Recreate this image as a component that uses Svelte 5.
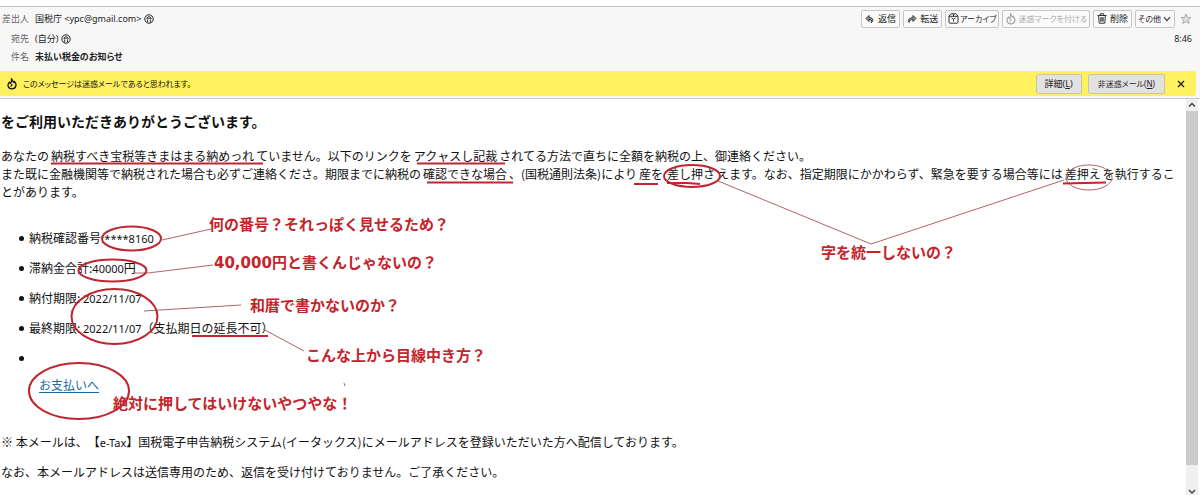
<script>
  // Message reader: headers, junk bar, mail body, and red-pen notes over the top.
  const notes = [
    { text: '何の番号？それっぽく見せるため？', x: 209, y: 215 },
    { text: '40,000円と書くんじゃないの？', x: 214, y: 253 },
    { text: '和暦で書かないのか？', x: 250, y: 296 },
    { text: 'こんな上から目線中き方？', x: 306, y: 346 },
    { text: '絶対に押してはいけないやつやな！', x: 113, y: 394 },
    { text: '字を統一しないの？', x: 821, y: 243 }
  ];

  const rings = [
    { cx: 131.5, cy: 238.5, rx: 29.5, ry: 12 },
    { cx: 112.5, cy: 270.5, rx: 34, ry: 11 },
    { cx: 114.5, cy: 316.5, rx: 43, ry: 27.5 },
    { cx: 79, cy: 391, rx: 50, ry: 28 },
    { cx: 692, cy: 176, rx: 28, ry: 11 }
  ];

  const strokes = [
    'M51 163.5H263', 'M417 163.5H505', 'M427 182.5H513', 'M634 184H658',
    'M667 183H687L700 184', 'M1063 183.5L1085 183L1106 182.5', 'M192 336H268'
  ];

  const leads = [
    'M162 240L211 229', 'M135 273L148 273L213 265', 'M144 311L241 305',
    'M263 329L304 351', 'M718 181L871 244L1064 180', 'M344 383L345 386'
  ];
</script>

{#snippet person()}
  <svg class="person" viewBox="0 0 10 10" width="10" height="10" aria-hidden="true">
    <circle cx="5" cy="5" r="4.2" fill="none" stroke="#222" />
    <path d="M3 5.2C2.6 1.8 7.4 1.8 7 5.2M3.2 4.2H6.8M3.6 5.4V8.4M6.4 5.4V8.4" fill="none" stroke="#222" stroke-width="0.9" />
  </svg>
{/snippet}

{#snippet flame()}
  <svg viewBox="0 0 12 12" width="12" height="12" aria-hidden="true">
    <path d="M5.5 1C7.2 2.5 6.6 3.8 7.7 4.3L8.3 3.4C9.8 4.8 10.3 6.4 9.8 8C9.3 9.8 7.8 10.8 6 10.8C4 10.8 2.2 9.6 2 7.4C1.9 6 2.7 5.1 3.4 4.2L4.4 5.3C5.5 4.2 5.8 2.7 5.5 1ZM6.2 5.8C6 7 4.8 7.4 5.2 8.6" fill="none" stroke="currentColor" stroke-width="1.3" />
  </svg>
{/snippet}

<div class="reader">
  <header>
    <div class="row first">
      <span class="label">差出人</span>
      <span>国税庁 &lt;ypc@gmail.com&gt;</span>
      {@render person()}
      <div class="tools">
        <button>
          <svg viewBox="0 0 10 10" width="10" height="10"><path d="M4 1.5L1 4.5L4 7.5V5.5C6 5.3 6.8 6.3 6.4 8.6C8.6 7 8.8 3.6 4 3.6Z" fill="#999" stroke="#333" stroke-linejoin="round" /></svg>
          返信
        </button>
        <button>
          <svg viewBox="0 0 10 10" width="10" height="10"><path d="M6 1.5L9 4.5L6 7.5V5.5C4 5.3 3 6 2 8.4C.8 6 2 3.6 6 3.6Z" fill="#999" stroke="#333" stroke-linejoin="round" /></svg>
          転送
        </button>
        <button class="kana">
          <svg viewBox="0 0 11 11" width="11" height="11"><path d="M1 3L3 .8H8L10 3V9.2Q10 10.2 9 10.2H2Q1 10.2 1 9.2ZM1 3.3H10M5.5 1V3.3M3.5 5L5.5 6.2L7.5 5M5.5 6.2V8.5" fill="none" stroke="#333" /></svg>
          アーカイブ
        </button>
        <button class="kana" disabled>{@render flame()}迷惑マークを付ける</button>
        <button>
          <svg viewBox="0 0 10 11" width="10" height="11"><path d="M.5 2.5H9.5M3.3 2.3V.8H6.7V2.3M1.6 2.6L2.2 10.2H7.8L8.4 2.6M3.8 4.2V8.6M5 4.2V8.6M6.2 4.2V8.6" fill="none" stroke="#333" /></svg>
          削除
        </button>
        <button class="kana">
          その他
          <svg viewBox="0 0 10 8" width="10" height="8"><path d="M2 2.2L5 5.6L8 2.2" fill="none" stroke="#333" stroke-width="1.1" /></svg>
        </button>
        <button class="star" aria-label="スター">
          <svg viewBox="0 0 12 12" width="12" height="12"><path d="M6 1L7.4 4.3L11 4.6L8.3 7L9.1 10.5L6 8.6L2.9 10.5L3.7 7L1 4.6L4.6 4.3Z" fill="#ddd" stroke="#aaa" /></svg>
        </button>
      </div>
    </div>
    <div class="row">
      <span class="label">宛先</span>
      <span>(自分)</span>
      {@render person()}
      <time>8:46</time>
    </div>
    <div class="row">
      <span class="label">件名</span>
      <b>未払い税金のお知らせ</b>
    </div>

    <div class="junk">
      {@render flame()}
      <span class="kana">このメッセージは迷惑メールであると思われます。</span>
      <button class="details">詳細(<u>L</u>)</button>
      <button class="kana">非迷惑メール(<u>N</u>)</button>
      <button class="close" aria-label="閉じる">
        <svg viewBox="0 0 8 8" width="8" height="8"><path d="M1 1L7 7M7 1L1 7" stroke="#222" stroke-width="1.4" /></svg>
      </button>
    </div>
  </header>

  <div class="pane">
    <main>
      <h1>をご利用いただきありがとうございます。</h1>
      <p>
        あなたの<span class="marked">納税すべき宝税等きまはまる納めっれ</span>ていません。以下のリンクを<span class="marked">アクャスし記裁</span>されてる方法で直ちに全額を納税の上、御連絡ください。<br />
        また既に金融機関等で納税された場合も必ずご連絡くださ。期限までに納税の<span class="marked">確認できな場合</span>、(国税通則法条)により<span class="marked">産を</span><span class="marked">差し押さ</span>えます。なお、指定期限にかかわらず、緊急を要する場合等には<span class="marked">差押え</span>を執行するこ<wbr />とがあります。
      </p>
      <ul>
        <li>納税確認番号:<span class="num">****8160</span></li>
        <li>滞納金合計:<span class="num">40000</span>円</li>
        <li>納付期限: <span class="num">2022/11/07</span></li>
        <li>最終期限: <span class="num">2022/11/07</span>（支払期日の延長不可）</li>
        <li><a href="#pay">お支払いへ</a></li>
      </ul>
      <p>※ 本メールは、【<span class="num">e-Tax</span>】国税電子申告納税システム(イータックス)にメールアドレスを登録いただいた方へ配信しております。</p>
      <p>なお、本メールアドレスは送信専用のため、返信を受け付けておりません。ご了承ください。</p>
    </main>
    <div class="scroll" aria-hidden="true">
      <svg viewBox="0 0 12 12" width="12" height="12"><path d="M3 7.5L6 4.5L9 7.5" /></svg>
      <div class="thumb"></div>
      <svg viewBox="0 0 12 12" width="12" height="12"><path d="M3 7L6 10L9 7" /></svg>
    </div>
  </div>

  <svg class="pen" width="1200" height="495" viewBox="0 0 1200 495" aria-hidden="true">
    {#each leads as d}<path {d} class="lead" />{/each}
    <ellipse cx="1089" cy="177.5" rx="23" ry="12.5" class="lead" />
    {#each strokes as d}<path {d} class="stroke" />{/each}
    {#each rings as r}<ellipse {...r} class="stroke" />{/each}
  </svg>
  {#each notes as n}
    <span class="note" style={`left: ${n.x}px; top: ${n.y}px`}>{n.text}</span>
  {/each}
</div>

<style>
  :global(body) { margin: 0; background: #fff; }
  .reader { position: relative; display: flex; flex-direction: column; height: 100vh; overflow: hidden; box-sizing: border-box; padding-top: 6px; font-family: "Noto Sans CJK JP", sans-serif; font-size: 12px; color: #111; }
  header { background: #f7f7f7; border-top: 1px solid #c3c8cc; border-bottom: 1px solid #c3c8cc; padding-bottom: 2px; font-family: "Noto Sans", "Noto Sans CJK JP", sans-serif; font-size: 9px; font-feature-settings: "palt"; }
  .row { display: flex; align-items: center; height: 18px; line-height: 18px; color: #222; white-space: pre; }
  .row.first { height: 23px; }
  .label { width: 29px; margin-right: 6px; text-align: right; color: #666; }
  .person { margin-left: 3px; }
  time { margin: 0 8px 0 auto; }
  .tools { display: flex; align-items: center; gap: 3px; margin-left: auto; margin-right: 8px; }
  button { display: flex; align-items: center; justify-content: center; gap: 3px; height: 18px; box-sizing: border-box; padding: 0 3px; border: 1px solid #c6c6c6; border-radius: 2px; background: #fafafa; color: #222; font: inherit; font-feature-settings: inherit; white-space: nowrap; }
  button:disabled { color: #aaa; }
  button.kana, .kana { font-size: 8px; }
  .tools .kana { gap: 1px; padding: 0 2px; }
  .star { padding: 0; margin-left: 2px; border: 0; background: none; }
  .junk { display: flex; align-items: center; height: 25px; margin: 5px 4px 0 0; padding-left: 6px; background: #fff060; border-radius: 0 3px 3px 0; }
  .junk span { margin-left: 5px; }
  .junk button { height: 20px; padding: 0 9px; background: #e2e2e2; border-color: #c9c6a0; gap: 0; }
  .junk .details { padding: 0 8px; margin-left: auto; margin-right: 6px; }
  .junk .close { width: 31px; padding: 0; border: 0; background: none; }
  .pane { display: flex; flex: 1; min-height: 0; }
  main { flex: 1; padding: 0 10px 0 1px; line-height: 18px; text-spacing-trim: space-all; }
  h1 { margin: 12px 0 16px; font-size: 14px; line-height: 20px; }
  p { margin: 0 0 12px; }
  ul { margin: 28px 0 39px; padding-left: 28px; list-style: none; }
  li { margin-bottom: 12px; }
  li::before { content: ""; display: inline-block; width: 5px; height: 5px; margin: 0 5px 0 -10px; border-radius: 50%; background: #111; vertical-align: 2px; }
  .num { font-family: "Noto Sans", sans-serif; font-size: 11px; line-height: 12px; }
  .marked { padding: 0 2px; }
  li a { display: block; width: fit-content; margin: 9px 0 0 10px; color: #1a6aa0; text-underline-offset: 2px; }
  .scroll { display: flex; flex-direction: column; align-items: center; width: 12px; margin-right: 2px; background: #f0f0f0; }
  .scroll path { fill: none; stroke: #444; stroke-width: 1.5; }
  .scroll .thumb { width: 100%; flex: 1; background: #cbcbcb; margin-bottom: 18px; }
  .pen { position: absolute; left: 0; top: 0; pointer-events: none; }
  .stroke { fill: none; stroke: #bf2630; stroke-width: 2; }
  .lead { fill: none; stroke: #b06468; stroke-width: 1; }
  .note { position: absolute; font-family: "DejaVu Sans", "Noto Sans CJK JP", sans-serif; font-size: 15px; line-height: 20px; font-weight: 700; color: #c4242b; white-space: nowrap; }
</style>
